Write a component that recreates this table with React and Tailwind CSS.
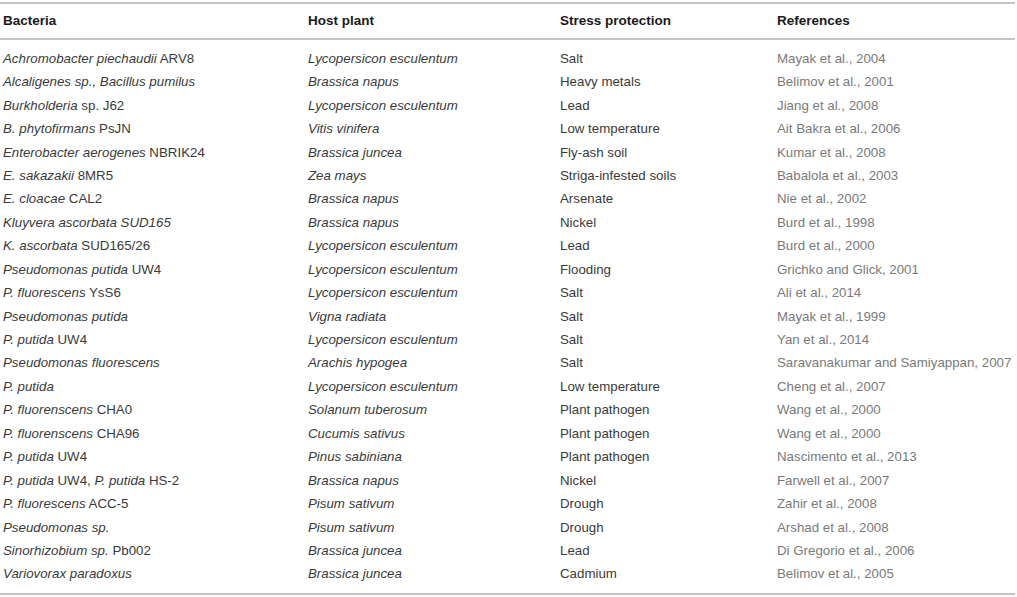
const rows = [
  [<><i>Achromobacter piechaudii</i> ARV8</>, "Lycopersicon esculentum", "Salt", "Mayak et al., 2004"],
  [<i>Alcaligenes sp., Bacillus pumilus</i>, "Brassica napus", "Heavy metals", "Belimov et al., 2001"],
  [<><i>Burkholderia</i> sp. J62</>, "Lycopersicon esculentum", "Lead", "Jiang et al., 2008"],
  [<><i>B. phytofirmans</i> PsJN</>, "Vitis vinifera", "Low temperature", "Ait Bakra et al., 2006"],
  [<><i>Enterobacter aerogenes</i> NBRIK24</>, "Brassica juncea", "Fly-ash soil", "Kumar et al., 2008"],
  [<><i>E. sakazakii</i> 8MR5</>, "Zea mays", "Striga-infested soils", "Babalola et al., 2003"],
  [<><i>E. cloacae</i> CAL2</>, "Brassica napus", "Arsenate", "Nie et al., 2002"],
  [<i>Kluyvera ascorbata SUD165</i>, "Brassica napus", "Nickel", "Burd et al., 1998"],
  [<><i>K. ascorbata</i> SUD165/26</>, "Lycopersicon esculentum", "Lead", "Burd et al., 2000"],
  [<><i>Pseudomonas putida</i> UW4</>, "Lycopersicon esculentum", "Flooding", "Grichko and Glick, 2001"],
  [<><i>P. fluorescens</i> YsS6</>, "Lycopersicon esculentum", "Salt", "Ali et al., 2014"],
  [<i>Pseudomonas putida</i>, "Vigna radiata", "Salt", "Mayak et al., 1999"],
  [<><i>P. putida</i> UW4</>, "Lycopersicon esculentum", "Salt", "Yan et al., 2014"],
  [<i>Pseudomonas fluorescens</i>, "Arachis hypogea", "Salt", "Saravanakumar and Samiyappan, 2007"],
  [<i>P. putida</i>, "Lycopersicon esculentum", "Low temperature", "Cheng et al., 2007"],
  [<><i>P. fluorenscens</i> CHA0</>, "Solanum tuberosum", "Plant pathogen", "Wang et al., 2000"],
  [<><i>P. fluorenscens</i> CHA96</>, "Cucumis sativus", "Plant pathogen", "Wang et al., 2000"],
  [<><i>P. putida</i> UW4</>, "Pinus sabiniana", "Plant pathogen", "Nascimento et al., 2013"],
  [<><i>P. putida</i> UW4, <i>P. putida</i> HS-2</>, "Brassica napus", "Nickel", "Farwell et al., 2007"],
  [<><i>P. fluorescens</i> ACC-5</>, "Pisum sativum", "Drough", "Zahir et al., 2008"],
  [<i>Pseudomonas sp.</i>, "Pisum sativum", "Drough", "Arshad et al., 2008"],
  [<><i>Sinorhizobium sp.</i> Pb002</>, "Brassica juncea", "Lead", "Di Gregorio et al., 2006"],
  [<i>Variovorax paradoxus</i>, "Brassica juncea", "Cadmium", "Belimov et al., 2005"],
];

const cols = "grid grid-cols-[305px_252px_217px_1fr]";

export default function App() {
  return (
    <div className="w-[1017px] h-[597px] bg-white pt-[2px] pr-[2px] text-[13.3px] font-['Liberation_Sans',Arial,sans-serif]">
      <div className="border-t-2 border-b-2 border-[#c4c4c4]">
        <div className={`${cols} h-[36px] items-center pl-[3px] font-bold text-[13.5px] text-[#1a1a1a] border-b-2 border-[#c4c4c4]`}>
          <div>Bacteria</div>
          <div>Host plant</div>
          <div>Stress protection</div>
          <div>References</div>
        </div>
        <div className="py-[7px]">
          {rows.map((r, i) => (
            <div key={i} className={`${cols} h-[23.45px] items-center pl-[3px] text-[#3a3a3a]`}>
              <div>{r[0]}</div>
              <div className="italic">{r[1]}</div>
              <div>{r[2]}</div>
              <div className="text-[#7a7a7a]">{r[3]}</div>
            </div>
          ))}
        </div>
      </div>
    </div>
  );
}
